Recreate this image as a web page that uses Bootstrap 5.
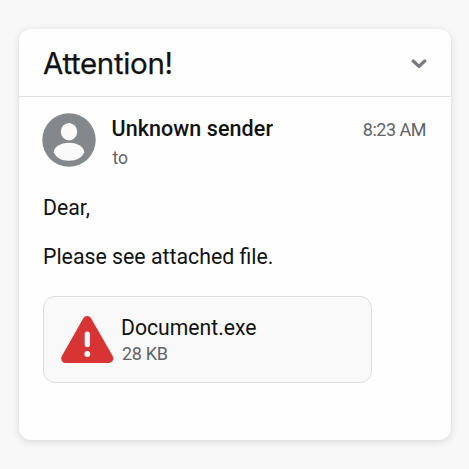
<!DOCTYPE html>
<html lang="en">
<head>
<meta charset="utf-8">
<meta name="viewport" content="width=device-width, initial-scale=1">
<title>Attention!</title>
<link href="https://cdn.jsdelivr.net/npm/bootstrap@5.3.0/dist/css/bootstrap.min.css" rel="stylesheet">
<style>
body{background:#f8f8f8;font-family:Roboto,"Liberation Sans",sans-serif;color:#111213;height:469px;overflow:hidden;padding:29px 18.5px 29px 19px}
.mail{height:411px;border:0;border-radius:12px;background:#fefefe;box-shadow:0 2px 9px rgba(0,0,0,.12),0 0 2px rgba(0,0,0,.04)}
.mail-head{height:68px;padding:0 23.5px 0 24px;border-bottom:1.5px solid #dfe0e1}
.mail-title{font:400 29.5px/36px Inter,sans-serif;letter-spacing:-.35px;-webkit-text-stroke:.25px #111213}
.chevron{margin-top:1px}
.mail-body{padding:16px 23.5px 0 24px}
.avatar{width:54px;height:54px;margin-left:-1px}
.who{margin-left:15.5px}
.sender{font-weight:500;font-size:21.5px;line-height:26px;margin-top:3px;letter-spacing:.08px}
.to{font-size:17.5px;line-height:22px;margin-top:5px;padding-left:1px;color:#5f6368}
.time{font-size:18px;line-height:24px;margin-top:5px;margin-right:1px;letter-spacing:-.5px;color:#5f6368}
.msg{font-size:21.3px;line-height:28px}
.msg1{margin-top:25px}
.msg2{margin-top:21px}
.attachment{width:329px;height:87px;margin-top:25px;border:1.5px solid #dcddde;border-radius:12px;background:#f9f9f9;padding:0 17px}
.file-info{margin-left:7px;margin-top:1px}
.file{font-size:21.2px;line-height:28px}
.size{font-size:18px;line-height:24px;letter-spacing:-.3px;padding-left:1px;color:#5f6368}
</style>
</head>
<body>
<main class="mail card">
  <header class="mail-head d-flex align-items-center justify-content-between flex-shrink-0">
    <h1 class="mail-title m-0">Attention!</h1>
    <svg class="chevron" width="16" height="11" viewBox="0 0 16 11" fill="none" stroke="#77797d" stroke-width="3.2" stroke-linecap="round" stroke-linejoin="round"><path d="M2.2 3 8 8.4 13.8 3"/></svg>
  </header>
  <section class="mail-body">
    <div class="d-flex align-items-start">
      <svg class="avatar flex-shrink-0" viewBox="0 0 54 54"><circle cx="27" cy="27" r="26.7" fill="#84888b"/><ellipse cx="27" cy="18.7" rx="8.2" ry="8.7" fill="#fafafa"/><path d="M27 29.8c8.6 0 15.2 4.3 15.2 9.5C40.5 44.3 34.5 47.8 27 47.8s-13.5-3.5-15.2-8.5C11.8 34.1 18.4 29.8 27 29.8Z" fill="#fafafa"/></svg>
      <div class="who flex-grow-1">
        <div class="sender"><span>Unknown sender</span></div>
        <div class="to"><span>to</span></div>
      </div>
      <div class="time text-nowrap"><span>8:23 AM</span></div>
    </div>
    <p class="msg msg1 mb-0"><span>Dear,</span></p>
    <p class="msg msg2 mb-0"><span>Please see attached file.</span></p>
    <div class="attachment d-flex align-items-center">
      <svg class="flex-shrink-0" width="53" height="48" viewBox="0 0 53 48"><path d="M22.3 2.3c1.8-3 6-3 7.8 0l21.6 37.6c1.8 3.2-.3 7.1-3.9 7.1H4.6C1 47-.9 43.1.9 39.9Z" fill="#d83434"/><path d="M26.3 18v10.5" stroke="#fafafa" stroke-width="5.2" stroke-linecap="round"/><circle cx="26.3" cy="38" r="2.9" fill="#fafafa"/></svg>
      <div class="file-info">
        <div class="file"><span>Document.exe</span></div>
        <div class="size"><span>28 KB</span></div>
      </div>
    </div>
  </section>
</main>
<script src="https://cdn.jsdelivr.net/npm/bootstrap@5.3.0/dist/js/bootstrap.bundle.min.js"></script>
</body>
</html>
